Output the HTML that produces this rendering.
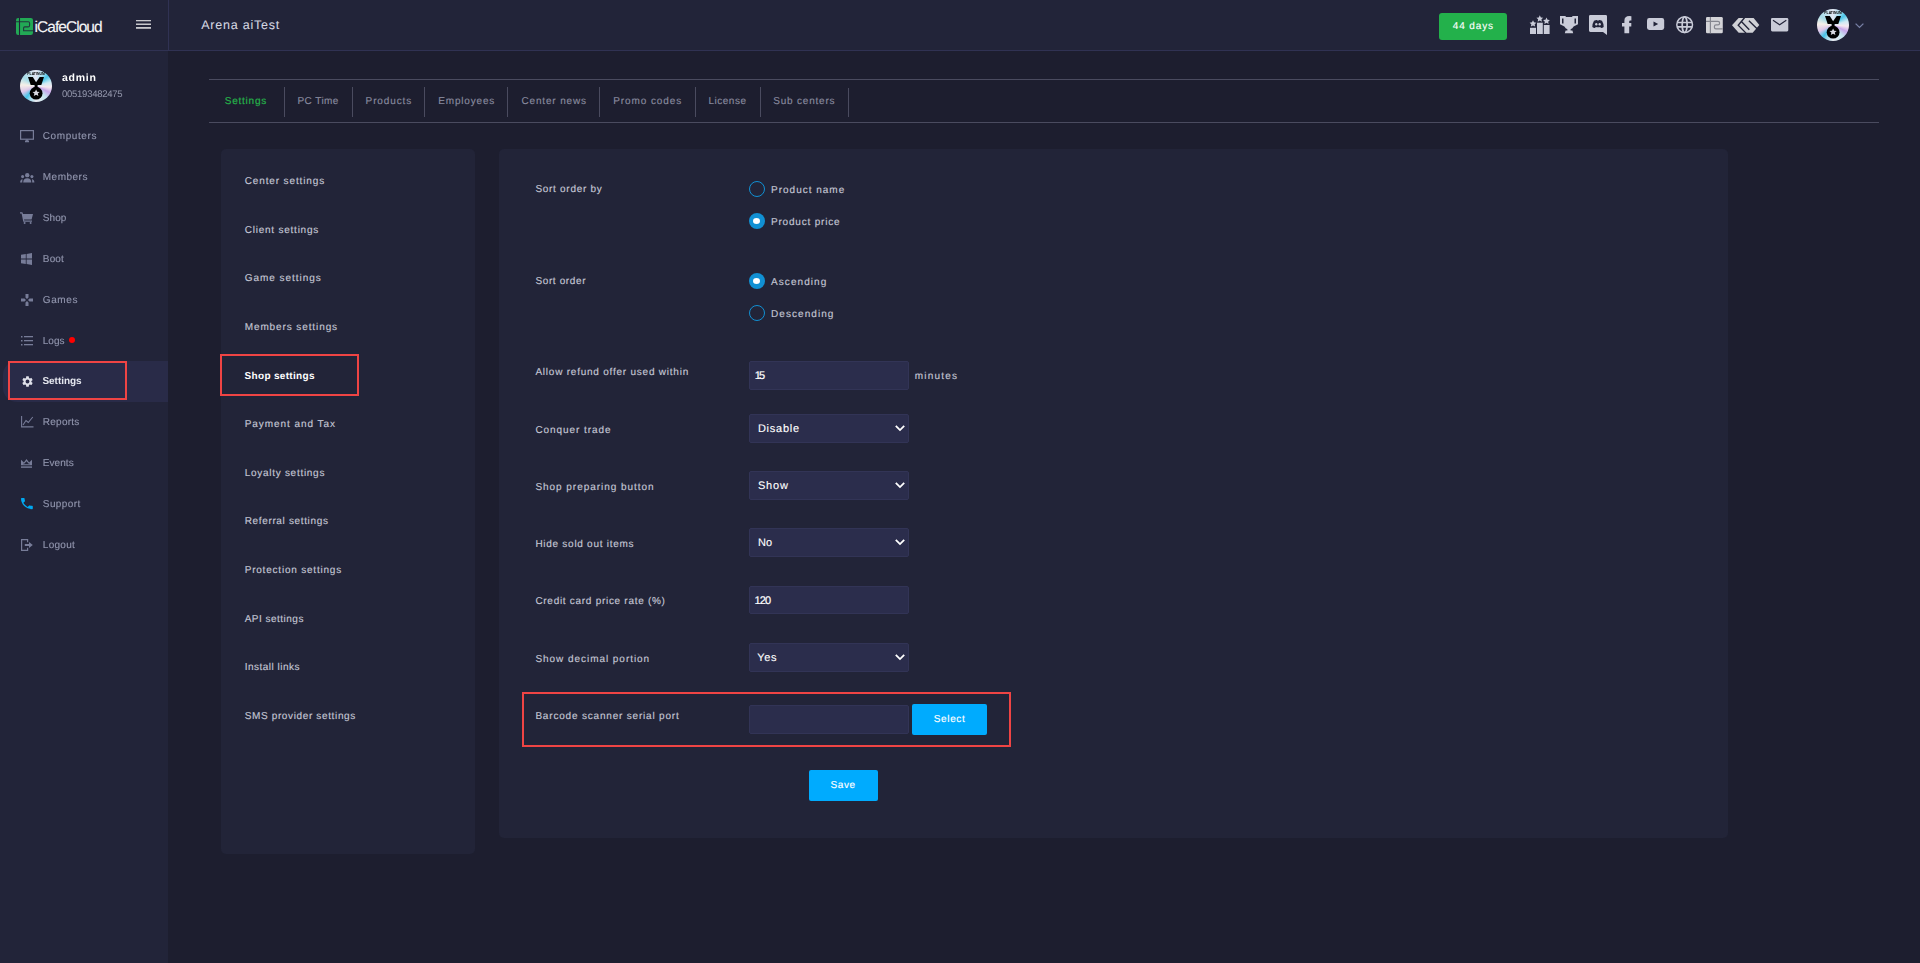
<!DOCTYPE html>
<html><head><meta charset="utf-8"><title>iCafeCloud</title>
<style>
html,body{margin:0;padding:0;}
body{width:1920px;height:963px;overflow:hidden;background:#1d1e2f;position:relative;font-family:"Liberation Sans",sans-serif;}
.a{position:absolute;box-sizing:border-box;}
.t{position:absolute;white-space:nowrap;line-height:1;text-rendering:geometricPrecision;}
svg{position:absolute;overflow:visible;}
</style></head><body>
<!-- header -->
<div class="a" style="left:0;top:0;width:1920px;height:50px;background:#222439;"></div>
<div class="a" style="left:0;top:50px;width:1920px;height:1px;background:#303253;"></div>
<div class="a" style="left:168px;top:0;width:1px;height:50px;background:#303253;"></div>
<!-- sidebar -->
<div class="a" style="left:0;top:51px;width:168px;height:912px;background:#222439;"></div>
<div class="a" style="left:3px;top:361px;width:165px;height:41px;background:#292b48;border-radius:14px 0 0 14px;"></div>
<div class="a" style="left:8px;top:361px;width:119px;height:39px;border:2px solid #ef4444;"></div>
<!-- tabs -->
<div class="a" style="left:209px;top:79px;width:1670px;height:1px;background:#4a4b5f;"></div>
<div class="a" style="left:209px;top:122px;width:1670px;height:1px;background:#4a4b5f;"></div>
<div class="a" style="left:284px;top:87px;width:1px;height:30px;background:#4a4b5f;"></div>
<div class="a" style="left:352px;top:87px;width:1px;height:30px;background:#4a4b5f;"></div>
<div class="a" style="left:424px;top:87px;width:1px;height:30px;background:#4a4b5f;"></div>
<div class="a" style="left:507px;top:87px;width:1px;height:30px;background:#4a4b5f;"></div>
<div class="a" style="left:599px;top:87px;width:1px;height:30px;background:#4a4b5f;"></div>
<div class="a" style="left:695px;top:87px;width:1px;height:30px;background:#4a4b5f;"></div>
<div class="a" style="left:760px;top:87px;width:1px;height:30px;background:#4a4b5f;"></div>
<div class="a" style="left:848px;top:88px;width:1px;height:29px;background:#4a4b5f;"></div>
<!-- panels -->
<div class="a" style="left:221px;top:149px;width:254px;height:705px;background:#222438;border-radius:5px;"></div>
<div class="a" style="left:499px;top:149px;width:1229px;height:689px;background:#222438;border-radius:5px;"></div>
<div class="a" style="left:220px;top:354px;width:139px;height:42px;border:2px solid #ef4444;"></div>
<!-- radios -->
<div class="a" style="left:749px;top:181px;width:16px;height:16px;border:1.5px solid #1190d3;border-radius:50%;"></div>
<div class="a" style="left:749px;top:213px;width:16px;height:16px;background:#1190d3;border-radius:50%;"></div>
<div class="a" style="left:753px;top:217.8px;width:7.2px;height:6.2px;background:#fff;border-radius:50%;"></div>
<div class="a" style="left:749px;top:273px;width:16px;height:16px;background:#1190d3;border-radius:50%;"></div>
<div class="a" style="left:753px;top:277.8px;width:7.2px;height:6.2px;background:#fff;border-radius:50%;"></div>
<div class="a" style="left:749px;top:305px;width:16px;height:16px;border:1.5px solid #1190d3;border-radius:50%;"></div>
<!-- inputs -->
<div class="a" style="left:749px;top:361px;width:160px;height:29px;background:#2b2d4c;border:1px solid #323456;border-radius:2px;"></div>
<div class="a" style="left:749px;top:414px;width:160px;height:29px;background:#2b2d4c;border:1px solid #323456;border-radius:2px;"></div>
<div class="a" style="left:749px;top:471px;width:160px;height:29px;background:#2b2d4c;border:1px solid #323456;border-radius:2px;"></div>
<div class="a" style="left:749px;top:528px;width:160px;height:29px;background:#2b2d4c;border:1px solid #323456;border-radius:2px;"></div>
<div class="a" style="left:749px;top:586px;width:160px;height:28px;background:#2b2d4c;border:1px solid #323456;border-radius:2px;"></div>
<div class="a" style="left:749px;top:643px;width:160px;height:29px;background:#2b2d4c;border:1px solid #323456;border-radius:2px;"></div>
<div class="a" style="left:749px;top:705px;width:160px;height:29px;background:#2b2d4c;border:1px solid #323456;border-radius:2px;"></div>
<!-- select chevrons -->
<svg style="left:895px;top:424.5px" width="10" height="7" viewBox="0 0 10 7"><path d="M0.8 0.9 L5 5.1 L9.2 0.9" fill="none" stroke="#fff" stroke-width="1.8"/></svg>
<svg style="left:895px;top:481.5px" width="10" height="7" viewBox="0 0 10 7"><path d="M0.8 0.9 L5 5.1 L9.2 0.9" fill="none" stroke="#fff" stroke-width="1.8"/></svg>
<svg style="left:895px;top:538.5px" width="10" height="7" viewBox="0 0 10 7"><path d="M0.8 0.9 L5 5.1 L9.2 0.9" fill="none" stroke="#fff" stroke-width="1.8"/></svg>
<svg style="left:895px;top:653.5px" width="10" height="7" viewBox="0 0 10 7"><path d="M0.8 0.9 L5 5.1 L9.2 0.9" fill="none" stroke="#fff" stroke-width="1.8"/></svg>
<!-- buttons -->
<div class="a" style="left:912px;top:704px;width:75px;height:31px;background:#00abfe;border-radius:2px;"></div>
<div class="a" style="left:809px;top:770px;width:69px;height:31px;background:#00abfe;border-radius:2px;"></div>
<div class="a" style="left:522px;top:692px;width:489px;height:55px;border:2px solid #ef4444;"></div>
<!-- header green -->
<div class="a" style="left:1439px;top:13px;width:68px;height:27px;background:#23b14b;border-radius:3px;"></div>
<!-- logs dot -->
<div class="a" style="left:69px;top:337px;width:6px;height:6px;background:#ff0000;border-radius:50%;"></div>
<!-- logo icon -->
<svg style="left:16px;top:18px" width="17" height="17" viewBox="0 0 17 17">
<rect x="0" y="0" width="17" height="17" rx="2.2" fill="#22a955"/>
<path d="M3.5 0 V17" stroke="#222439" stroke-width="1.1" fill="none"/>
<path d="M0 3.8 H3.5 M3.5 3.8 H12.3 Q13.6 3.8 13.6 5.2 V7.4 Q13.6 8.9 12.2 8.9 H8.6 Q7.6 8.9 7.6 9.9 V12.7 H17" stroke="#222439" stroke-width="1.1" fill="none" opacity="0.85"/>
</svg>
<!-- hamburger -->
<svg style="left:136px;top:19px" width="16" height="11" viewBox="0 0 16 11"><rect x="0" y="1" width="15" height="1.3" fill="#c8c8cd"/><rect x="0" y="4.5" width="15" height="1.5" fill="#c8c8cd"/><rect x="0" y="8" width="15" height="1.8" fill="#c8c8cd"/></svg>
<!-- sidebar avatar -->
<div class="a" style="left:20px;top:70px;width:32px;height:32px;border-radius:50%;background:conic-gradient(from 0deg,#e3e6f2 0deg,#a9def0 30deg,#49c6e9 50deg,#cfeaf3 75deg,#f6eaf0 95deg,#c7a6ea 115deg,#c6e6f0 140deg,#e9eaf1 180deg,#9fd9ec 205deg,#44c4e8 220deg,#dcc6ea 245deg,#f6f0e8 275deg,#a6dce8 305deg,#e3e6f2 360deg);"></div>
<svg style="left:20px;top:70px;will-change:transform" width="32" height="32" viewBox="0 0 32 32">
<text x="16" y="4.6" font-family="Liberation Sans" font-weight="700" font-size="4.2" text-anchor="middle" fill="#050505" textLength="17.5" lengthAdjust="spacingAndGlyphs">PLATINUM</text>
<path d="M8 7 H12.8 L16.1 12.3 L19.7 7 H24 L21.3 15 H10.7 Z" fill="#000"/>
<rect x="14.6" y="14.5" width="3" height="3.5" fill="#000"/>
<circle cx="16.1" cy="23.2" r="6.4" fill="#000"/>
<path d="M16.1 19.4 L17.2 21.7 L19.7 21.9 L17.8 23.6 L18.4 26.1 L16.1 24.8 L13.8 26.1 L14.4 23.6 L12.5 21.9 L15 21.7 Z" fill="#d9dae2"/>
</svg>
<!-- header avatar -->
<div class="a" style="left:1817px;top:9px;width:32px;height:32px;border-radius:50%;background:conic-gradient(from 0deg,#e3e6f2 0deg,#a9def0 30deg,#49c6e9 50deg,#cfeaf3 75deg,#f6eaf0 95deg,#c7a6ea 115deg,#c6e6f0 140deg,#e9eaf1 180deg,#9fd9ec 205deg,#44c4e8 220deg,#dcc6ea 245deg,#f6f0e8 275deg,#a6dce8 305deg,#e3e6f2 360deg);"></div>
<svg style="left:1817px;top:9px;will-change:transform" width="32" height="32" viewBox="0 0 32 32">
<text x="16" y="4.6" font-family="Liberation Sans" font-weight="700" font-size="4.2" text-anchor="middle" fill="#050505" textLength="17.5" lengthAdjust="spacingAndGlyphs">PLATINUM</text>
<path d="M8 7 H12.8 L16.1 12.3 L19.7 7 H24 L21.3 15 H10.7 Z" fill="#000"/>
<rect x="14.6" y="14.5" width="3" height="3.5" fill="#000"/>
<circle cx="16.1" cy="23.2" r="6.4" fill="#000"/>
<path d="M16.1 19.4 L17.2 21.7 L19.7 21.9 L17.8 23.6 L18.4 26.1 L16.1 24.8 L13.8 26.1 L14.4 23.6 L12.5 21.9 L15 21.7 Z" fill="#d9dae2"/>
</svg>
<svg style="left:1855px;top:22.5px" width="9" height="6" viewBox="0 0 9 6"><path d="M0.6 0.6 L4.5 4.4 L8.4 0.6" fill="none" stroke="#7880a6" stroke-width="1.3"/></svg>
<!-- header icons -->
<svg style="left:1530px;top:15px" width="20" height="19" viewBox="0 0 20 19" fill="#c9cbd8">
<rect x="0" y="12.8" width="6" height="6.2"/><rect x="7" y="7.7" width="5.8" height="11.3"/><rect x="13.8" y="10" width="5.8" height="9"/>
<path d="M3 5.2 l1.05 2.15 2.35 0.3 -1.72 1.62 0.42 2.33 -2.1 -1.13 -2.1 1.13 0.42 -2.33 -1.72 -1.62 2.35 -0.3z"/>
<path d="M9.8 0.3 l1.05 2.15 2.35 0.3 -1.72 1.62 0.42 2.33 -2.1 -1.13 -2.1 1.13 0.42 -2.33 -1.72 -1.62 2.35 -0.3z"/>
<path d="M16.5 2.6 l1.05 2.15 2.35 0.3 -1.72 1.62 0.42 2.33 -2.1 -1.13 -2.1 1.13 0.42 -2.33 -1.72 -1.62 2.35 -0.3z"/>
</svg>
<svg style="left:1560px;top:16px" width="18" height="17.3" viewBox="0 0 18 17.3" fill="#c9cbd8">
<path fill-rule="evenodd" d="M0 0 H5.4 L6 1 H12 L12.6 0 H18 V8.2 L13.6 10.4 Q12.6 12.4 10.6 13.2 V14.6 H12.4 L13.2 17.3 H4.8 L5.6 14.6 H7.4 V13.2 Q5.4 12.4 4.4 10.4 L0 8.2 Z M2 2.4 H3.5 V7.4 H2 Z M14.5 2.4 H16 V7.4 H14.5 Z"/>
</svg>
<svg style="left:1589px;top:15px" width="18" height="20" viewBox="0 0 18 20" fill="#c9cbd8">
<path d="M1.3 0 H16.7 Q18 0 18 1.3 V20 L14 16.9 H1.3 Q0 16.9 0 15.6 V1.3 Q0 0 1.3 0 Z"/>
<path d="M5 5.8 Q7 4.9 8.2 5.1 L8.6 5.8 Q9 5.7 9.4 5.8 L9.8 5.1 Q11 4.9 13 5.8 Q14.8 8.8 14.7 12 Q13.5 12.9 12 13 L11.2 11.9 Q9 12.5 6.8 11.9 L6 13 Q4.5 12.9 3.3 12 Q3.2 8.8 5 5.8 Z" fill="#222439"/>
<ellipse cx="7.3" cy="9.3" rx="1.15" ry="1.25" fill="#c9cbd8"/><ellipse cx="10.7" cy="9.3" rx="1.15" ry="1.25" fill="#c9cbd8"/>
</svg>
<svg style="left:1622px;top:15.8px" width="10" height="17.2" viewBox="0 0 10 17.2" fill="#c9cbd8">
<path d="M7.2 17.2 V10.4 H9.3 V7 H7.2 V5.4 Q7.2 4.4 8.2 4.4 H9.4 V0.2 Q8.6 0 7.4 0 Q2.4 0 2.4 4.6 V7 H0 V10.4 H2.4 V17.2 Z"/>
</svg>
<svg style="left:1647px;top:18.4px" width="17.2" height="12" viewBox="0 0 17.2 12" fill="#c9cbd8">
<path d="M2.2 0 H15 Q17.2 0 17.2 2.4 V9.6 Q17.2 12 15 12 H2.2 Q0 12 0 9.6 V2.4 Q0 0 2.2 0 Z"/>
<path d="M6.5 3.6 V8.6 L11.2 6.1 Z" fill="#222439"/>
</svg>
<svg style="left:1675.8px;top:16px" width="17.3" height="17.3" viewBox="0 0 17.3 17.3" fill="none" stroke="#c9cbd8">
<circle cx="8.65" cy="8.65" r="7.85" stroke-width="1.5"/><ellipse cx="8.65" cy="8.65" rx="2.45" ry="7.85" stroke-width="1.7"/><path d="M1 6.5 H16.3 M1 10.8 H16.3" stroke-width="1.7"/>
</svg>
<svg style="left:1705.6px;top:16.5px" width="16.8" height="16.2" viewBox="0 0 16.8 16.2" fill="#d4d4d8">
<rect x="0" y="0" width="16.8" height="16.2" rx="1.3"/>
<path d="M4.4 0 V16.2 M0 4.3 H12 Q13.6 4.3 13.6 5.9 V6.3 Q13.6 7.9 12 7.9 H10 Q8.4 7.9 8.4 9.5 V10.3 Q8.4 11.9 10 11.9 H16.8" fill="none" stroke="#85868f" stroke-width="1.2"/>
</svg>
<svg style="left:1732.2px;top:18px" width="27.5" height="15" viewBox="0 0 27.5 15" fill="#d0d1d6">
<path d="M0 7.2 L6.6 0 H21.6 L27.3 7.1 L20.7 14.8 H6.7 Z"/>
<path d="M12.5 -0.3 L6.2 7.2 L14 15.1 M9.4 3.5 L17.3 11.8 M16.9 2.7 L25.6 11.3" fill="none" stroke="#222439" stroke-width="1.35"/>
</svg>
<svg style="left:1770.8px;top:17.9px" width="17.3" height="13.4" viewBox="0 0 17.3 13.4" fill="#c9cbd8">
<rect x="0" y="0" width="17.3" height="13.4" rx="1.3"/>
<path d="M2 2.2 L8.65 6.8 L15.3 2.2" fill="none" stroke="#222439" stroke-width="1.1"/>
</svg>
<!-- sidebar icons -->
<svg style="left:20px;top:130px" width="14" height="12" viewBox="0 0 14 12" fill="none" stroke="#777c98" stroke-width="1.2">
<rect x="0.6" y="0.6" width="12.8" height="8.6"/><path d="M5 11.4 H9 M7 9.4 V11.4" stroke-width="1.6"/>
</svg>
<svg style="left:20px;top:172.5px" width="14.5" height="9.5" viewBox="0 0 15 10" fill="#777c98">
<circle cx="7.5" cy="2.3" r="2.3"/><path d="M3.2 10 Q3.5 5.6 7.5 5.6 Q11.5 5.6 11.8 10 Z"/>
<circle cx="2.6" cy="3.8" r="1.6"/><path d="M0 10 Q0 6.8 2.6 6.6 Q2.2 8 2.3 10 Z"/>
<circle cx="12.4" cy="3.8" r="1.6"/><path d="M15 10 Q15 6.8 12.4 6.6 Q12.8 8 12.7 10 Z"/>
</svg>
<svg style="left:20px;top:212px" width="13" height="12" viewBox="0 0 13 12" fill="#777c98">
<path d="M0 0.3 H2.4 L3 2 H13 L11.6 7.5 H4 L4.3 8.5 H12 V9.7 H3.3 L1.6 1.5 H0 Z"/><circle cx="4.6" cy="11" r="1"/><circle cx="10.6" cy="11" r="1"/>
</svg>
<svg style="left:21px;top:253px" width="11" height="12" viewBox="0 0 11 12" fill="#777c98">
<path d="M0 1.8 L4.8 1 V5.6 H0 Z M5.6 0.9 L11 0 V5.6 H5.6 Z M0 6.4 H4.8 V11 L0 10.2 Z M5.6 6.4 H11 V12 L5.6 11.1 Z"/>
</svg>
<svg style="left:21px;top:294px" width="12" height="12" viewBox="0 0 12 12" fill="#777c98">
<path d="M4.5 0 H7.5 V3.5 L6 5 L4.5 3.5 Z M4.5 12 H7.5 V8.5 L6 7 L4.5 8.5 Z M0 4.5 V7.5 H3.5 L5 6 L3.5 4.5 Z M12 4.5 V7.5 H8.5 L7 6 L8.5 4.5 Z"/>
</svg>
<svg style="left:21px;top:336px" width="12" height="10" viewBox="0 0 12 10" fill="#777c98">
<rect x="0" y="0" width="1.5" height="1.5"/><rect x="3" y="0" width="9" height="1.3"/>
<rect x="0" y="4" width="1.5" height="1.5"/><rect x="3" y="4" width="9" height="1.3"/>
<rect x="0" y="8" width="1.5" height="1.5"/><rect x="3" y="8" width="9" height="1.3"/>
</svg>
<svg style="left:20.5px;top:374.5px" width="13" height="13" viewBox="0 0 24 24" fill="#dfe1ea">
<path d="M19.14 12.94c.04-.3.06-.61.06-.94 0-.32-.02-.64-.07-.94l2.03-1.58a.49.49 0 0 0 .12-.61l-1.92-3.32a.49.49 0 0 0-.59-.22l-2.39.96c-.5-.38-1.03-.7-1.62-.94l-.36-2.54a.48.48 0 0 0-.48-.41h-3.84c-.24 0-.43.17-.47.41l-.36 2.54c-.59.24-1.13.57-1.62.94l-2.39-.96a.49.49 0 0 0-.59.22L2.74 8.87c-.12.21-.08.47.12.61l2.03 1.58c-.05.3-.09.63-.09.94s.02.64.07.94l-2.03 1.58a.49.49 0 0 0-.12.61l1.92 3.32c.12.22.37.29.59.22l2.39-.96c.5.38 1.03.7 1.62.94l.36 2.54c.05.24.24.41.48.41h3.84c.24 0 .44-.17.47-.41l.36-2.54c.59-.24 1.13-.56 1.62-.94l2.39.96c.22.08.47 0 .59-.22l1.92-3.32c.12-.22.07-.47-.12-.61l-2.01-1.58zM12 15.6A3.6 3.6 0 1 1 12 8.4a3.6 3.6 0 0 1 0 7.2z"/>
</svg>
<svg style="left:21px;top:416px" width="12.5" height="11.5" viewBox="0 0 12.5 11.5" fill="none" stroke="#777c98" stroke-width="1.1">
<path d="M0.6 0 V10.9 H12.5"/><path d="M2 9 L5 4.5 L7.3 6.5 L11.8 1"/>
</svg>
<svg style="left:21.4px;top:459px" width="11" height="9" viewBox="0 0 11 9" fill="#777c98">
<path d="M0 0.8 L2.9 3.4 L5.5 0 L8.1 3.4 L11 0.8 V6.3 H0 Z M2.2 4.6 V5.2 H8.8 V4.6 L8 5 L5.5 2.2 L3 5 Z" fill-rule="evenodd"/><rect x="0" y="7.4" width="11" height="1.4"/>
</svg>
<svg style="left:20.8px;top:498.2px" width="11.8" height="11.2" viewBox="3 3 18 18" fill="#00a8f0" preserveAspectRatio="none">
<path d="M6.62 10.79c1.44 2.83 3.76 5.14 6.59 6.59l2.2-2.2c.27-.27.67-.36 1.02-.24 1.12.37 2.33.57 3.57.57.55 0 1 .45 1 1V20c0 .55-.45 1-1 1C10.61 21 3 13.39 3 4c0-.55.45-1 1-1h3.5c.55 0 1 .45 1 1 0 1.25.2 2.45.57 3.57.11.35.03.74-.25 1.02l-2.2 2.2z"/>
</svg>
<svg style="left:21px;top:538.7px" width="12" height="12" viewBox="0 0 12 12" fill="#777c98">
<path d="M0 0 H7.2 V3.2 H6 V1.2 H1.2 V10.8 H6 V8.8 H7.2 V12 H0 Z"/><path d="M3.8 5.1 H8 V2.9 L11.8 6 L8 9.1 V6.9 H3.8 Z"/>
</svg>
<div class="t" style="left:201.20px;top:19.00px;font-size:12.5px;font-weight:400;color:#d6d8e2;letter-spacing:0.781px;font-style:normal;-webkit-text-stroke:0.05px #d6d8e2;">Arena aiTest</div>
<div class="t" style="left:1452.80px;top:22.00px;font-size:10px;font-weight:400;color:#ffffff;letter-spacing:0.863px;font-style:normal;-webkit-text-stroke:0.12px #fff;">44 days</div>
<div class="t" style="left:34.60px;top:20.00px;font-size:15.5px;font-weight:400;color:#f4f4f6;letter-spacing:-0.962px;font-style:normal;-webkit-text-stroke:0.1px #fff;">iCafeCloud</div>
<div class="t" style="left:62.00px;top:73.00px;font-size:10.5px;font-weight:700;color:#ffffff;letter-spacing:0.748px;font-style:normal;">admin</div>
<div class="t" style="left:62.00px;top:90.00px;font-size:9.5px;font-weight:400;color:#9093a8;letter-spacing:-0.256px;font-style:normal;-webkit-text-stroke:0.05px #9093a8;">005193482475</div>
<div class="t" style="left:42.80px;top:132.00px;font-size:10px;font-weight:400;color:#9094ac;letter-spacing:0.587px;font-style:normal;-webkit-text-stroke:0.15px #9094ac;">Computers</div>
<div class="t" style="left:42.80px;top:173.00px;font-size:10px;font-weight:400;color:#9094ac;letter-spacing:0.488px;font-style:normal;-webkit-text-stroke:0.15px #9094ac;">Members</div>
<div class="t" style="left:42.80px;top:214.00px;font-size:10px;font-weight:400;color:#9094ac;letter-spacing:0.069px;font-style:normal;-webkit-text-stroke:0.15px #9094ac;">Shop</div>
<div class="t" style="left:42.80px;top:255.00px;font-size:10px;font-weight:400;color:#9094ac;letter-spacing:0.169px;font-style:normal;-webkit-text-stroke:0.15px #9094ac;">Boot</div>
<div class="t" style="left:42.80px;top:296.00px;font-size:10px;font-weight:400;color:#9094ac;letter-spacing:0.592px;font-style:normal;-webkit-text-stroke:0.15px #9094ac;">Games</div>
<div class="t" style="left:42.80px;top:337.00px;font-size:10px;font-weight:400;color:#9094ac;letter-spacing:0.005px;font-style:normal;-webkit-text-stroke:0.15px #9094ac;">Logs</div>
<div class="t" style="left:42.50px;top:377.00px;font-size:10px;font-weight:700;color:#e4e6ee;letter-spacing:-0.055px;font-style:normal;">Settings</div>
<div class="t" style="left:42.80px;top:418.00px;font-size:10px;font-weight:400;color:#9094ac;letter-spacing:0.248px;font-style:normal;-webkit-text-stroke:0.15px #9094ac;">Reports</div>
<div class="t" style="left:42.80px;top:459.00px;font-size:10px;font-weight:400;color:#9094ac;letter-spacing:0.066px;font-style:normal;-webkit-text-stroke:0.15px #9094ac;">Events</div>
<div class="t" style="left:42.80px;top:500.00px;font-size:10px;font-weight:400;color:#9094ac;letter-spacing:0.409px;font-style:normal;-webkit-text-stroke:0.15px #9094ac;">Support</div>
<div class="t" style="left:42.80px;top:541.00px;font-size:10px;font-weight:400;color:#9094ac;letter-spacing:0.278px;font-style:normal;-webkit-text-stroke:0.15px #9094ac;">Logout</div>
<div class="t" style="left:224.80px;top:97.00px;font-size:10px;font-weight:400;color:#25b34a;letter-spacing:0.760px;font-style:normal;-webkit-text-stroke:0.2px #25b34a;">Settings</div>
<div class="t" style="left:297.50px;top:97.00px;font-size:10px;font-weight:400;color:#888a9e;letter-spacing:0.424px;font-style:normal;-webkit-text-stroke:0.15px #888a9e;">PC Time</div>
<div class="t" style="left:365.60px;top:97.00px;font-size:10px;font-weight:400;color:#888a9e;letter-spacing:0.884px;font-style:normal;-webkit-text-stroke:0.15px #888a9e;">Products</div>
<div class="t" style="left:438.30px;top:97.00px;font-size:10px;font-weight:400;color:#888a9e;letter-spacing:0.817px;font-style:normal;-webkit-text-stroke:0.15px #888a9e;">Employees</div>
<div class="t" style="left:521.40px;top:97.00px;font-size:10px;font-weight:400;color:#888a9e;letter-spacing:0.856px;font-style:normal;-webkit-text-stroke:0.15px #888a9e;">Center news</div>
<div class="t" style="left:613.20px;top:97.00px;font-size:10px;font-weight:400;color:#888a9e;letter-spacing:0.918px;font-style:normal;-webkit-text-stroke:0.15px #888a9e;">Promo codes</div>
<div class="t" style="left:708.40px;top:97.00px;font-size:10px;font-weight:400;color:#888a9e;letter-spacing:0.532px;font-style:normal;-webkit-text-stroke:0.15px #888a9e;">License</div>
<div class="t" style="left:773.30px;top:97.00px;font-size:10px;font-weight:400;color:#888a9e;letter-spacing:0.784px;font-style:normal;-webkit-text-stroke:0.15px #888a9e;">Sub centers</div>
<div class="t" style="left:244.70px;top:177.00px;font-size:10px;font-weight:400;color:#c4c6d4;letter-spacing:0.875px;font-style:normal;-webkit-text-stroke:0.15px #c4c6d4;">Center settings</div>
<div class="t" style="left:244.70px;top:226.00px;font-size:10px;font-weight:400;color:#c4c6d4;letter-spacing:0.771px;font-style:normal;-webkit-text-stroke:0.15px #c4c6d4;">Client settings</div>
<div class="t" style="left:244.70px;top:274.00px;font-size:10px;font-weight:400;color:#c4c6d4;letter-spacing:0.961px;font-style:normal;-webkit-text-stroke:0.15px #c4c6d4;">Game settings</div>
<div class="t" style="left:244.70px;top:323.00px;font-size:10px;font-weight:400;color:#c4c6d4;letter-spacing:0.899px;font-style:normal;-webkit-text-stroke:0.15px #c4c6d4;">Members settings</div>
<div class="t" style="left:244.60px;top:372.00px;font-size:10px;font-weight:700;color:#ffffff;letter-spacing:0.312px;font-style:normal;">Shop settings</div>
<div class="t" style="left:244.70px;top:420.00px;font-size:10px;font-weight:400;color:#c4c6d4;letter-spacing:0.945px;font-style:normal;-webkit-text-stroke:0.15px #c4c6d4;">Payment and Tax</div>
<div class="t" style="left:244.70px;top:469.00px;font-size:10px;font-weight:400;color:#c4c6d4;letter-spacing:0.718px;font-style:normal;-webkit-text-stroke:0.15px #c4c6d4;">Loyalty settings</div>
<div class="t" style="left:244.70px;top:517.00px;font-size:10px;font-weight:400;color:#c4c6d4;letter-spacing:0.650px;font-style:normal;-webkit-text-stroke:0.15px #c4c6d4;">Referral settings</div>
<div class="t" style="left:244.70px;top:566.00px;font-size:10px;font-weight:400;color:#c4c6d4;letter-spacing:0.791px;font-style:normal;-webkit-text-stroke:0.15px #c4c6d4;">Protection settings</div>
<div class="t" style="left:244.70px;top:615.00px;font-size:10px;font-weight:400;color:#c4c6d4;letter-spacing:0.486px;font-style:normal;-webkit-text-stroke:0.15px #c4c6d4;">API settings</div>
<div class="t" style="left:244.70px;top:663.00px;font-size:10px;font-weight:400;color:#c4c6d4;letter-spacing:0.499px;font-style:normal;-webkit-text-stroke:0.15px #c4c6d4;">Install links</div>
<div class="t" style="left:244.70px;top:712.00px;font-size:10px;font-weight:400;color:#c4c6d4;letter-spacing:0.639px;font-style:normal;-webkit-text-stroke:0.15px #c4c6d4;">SMS provider settings</div>
<div class="t" style="left:535.40px;top:185.00px;font-size:10px;font-weight:400;color:#c4c6d4;letter-spacing:0.716px;font-style:normal;-webkit-text-stroke:0.15px #c4c6d4;">Sort order by</div>
<div class="t" style="left:535.40px;top:277.00px;font-size:10px;font-weight:400;color:#c4c6d4;letter-spacing:0.630px;font-style:normal;-webkit-text-stroke:0.15px #c4c6d4;">Sort order</div>
<div class="t" style="left:535.40px;top:368.00px;font-size:10px;font-weight:400;color:#c4c6d4;letter-spacing:0.773px;font-style:normal;-webkit-text-stroke:0.15px #c4c6d4;">Allow refund offer used within</div>
<div class="t" style="left:535.40px;top:426.00px;font-size:10px;font-weight:400;color:#c4c6d4;letter-spacing:0.928px;font-style:normal;-webkit-text-stroke:0.15px #c4c6d4;">Conquer trade</div>
<div class="t" style="left:535.40px;top:483.00px;font-size:10px;font-weight:400;color:#c4c6d4;letter-spacing:0.965px;font-style:normal;-webkit-text-stroke:0.15px #c4c6d4;">Shop preparing button</div>
<div class="t" style="left:535.40px;top:540.00px;font-size:10px;font-weight:400;color:#c4c6d4;letter-spacing:0.726px;font-style:normal;-webkit-text-stroke:0.15px #c4c6d4;">Hide sold out items</div>
<div class="t" style="left:535.40px;top:597.00px;font-size:10px;font-weight:400;color:#c4c6d4;letter-spacing:0.713px;font-style:normal;-webkit-text-stroke:0.15px #c4c6d4;">Credit card price rate (%)</div>
<div class="t" style="left:535.40px;top:655.00px;font-size:10px;font-weight:400;color:#c4c6d4;letter-spacing:0.956px;font-style:normal;-webkit-text-stroke:0.15px #c4c6d4;">Show decimal portion</div>
<div class="t" style="left:535.40px;top:712.00px;font-size:10px;font-weight:400;color:#c4c6d4;letter-spacing:0.811px;font-style:normal;-webkit-text-stroke:0.15px #c4c6d4;">Barcode scanner serial port</div>
<div class="t" style="left:771.00px;top:186.00px;font-size:10px;font-weight:400;color:#c4c6d4;letter-spacing:1.001px;font-style:normal;-webkit-text-stroke:0.15px #c4c6d4;">Product name</div>
<div class="t" style="left:771.00px;top:218.00px;font-size:10px;font-weight:400;color:#c4c6d4;letter-spacing:0.804px;font-style:normal;-webkit-text-stroke:0.15px #c4c6d4;">Product price</div>
<div class="t" style="left:771.00px;top:278.00px;font-size:10px;font-weight:400;color:#c4c6d4;letter-spacing:1.070px;font-style:normal;-webkit-text-stroke:0.15px #c4c6d4;">Ascending</div>
<div class="t" style="left:771.00px;top:310.00px;font-size:10px;font-weight:400;color:#c4c6d4;letter-spacing:1.061px;font-style:normal;-webkit-text-stroke:0.15px #c4c6d4;">Descending</div>
<div class="t" style="left:754.80px;top:371.00px;font-size:11px;font-weight:400;color:#ffffff;letter-spacing:-1.918px;font-style:normal;-webkit-text-stroke:0.2px #fff;">15</div>
<div class="t" style="left:914.80px;top:372.00px;font-size:10px;font-weight:400;color:#c4c6d4;letter-spacing:1.198px;font-style:normal;-webkit-text-stroke:0.15px #c4c6d4;">minutes</div>
<div class="t" style="left:757.90px;top:424.00px;font-size:11px;font-weight:400;color:#ffffff;letter-spacing:0.756px;font-style:normal;-webkit-text-stroke:0.12px #fff;">Disable</div>
<div class="t" style="left:757.90px;top:481.00px;font-size:11px;font-weight:400;color:#ffffff;letter-spacing:0.809px;font-style:normal;-webkit-text-stroke:0.12px #fff;">Show</div>
<div class="t" style="left:757.90px;top:538.00px;font-size:11px;font-weight:400;color:#ffffff;letter-spacing:0.256px;font-style:normal;-webkit-text-stroke:0.12px #fff;">No</div>
<div class="t" style="left:754.60px;top:596.00px;font-size:11px;font-weight:400;color:#ffffff;letter-spacing:-0.968px;font-style:normal;-webkit-text-stroke:0.2px #fff;">120</div>
<div class="t" style="left:757.30px;top:653.00px;font-size:11px;font-weight:400;color:#ffffff;letter-spacing:0.678px;font-style:normal;-webkit-text-stroke:0.12px #fff;">Yes</div>
<div class="t" style="left:933.80px;top:715.00px;font-size:10px;font-weight:400;color:#ffffff;letter-spacing:0.637px;font-style:normal;-webkit-text-stroke:0.15px #fff;">Select</div>
<div class="t" style="left:830.40px;top:781.00px;font-size:10px;font-weight:400;color:#ffffff;letter-spacing:0.656px;font-style:normal;-webkit-text-stroke:0.15px #fff;">Save</div>
</body></html>
